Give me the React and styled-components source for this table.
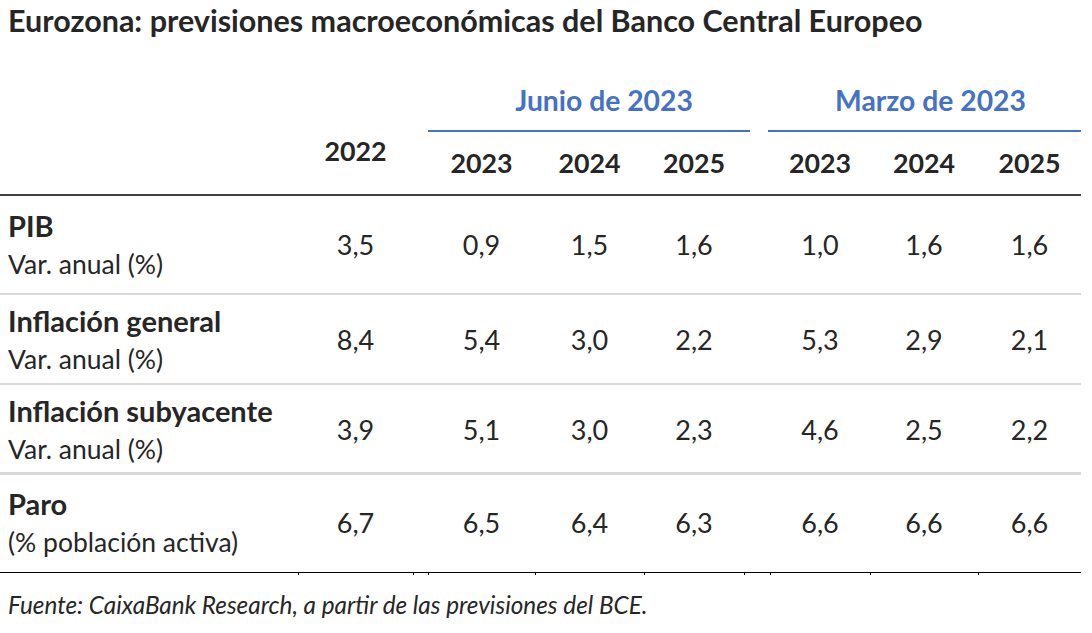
import React from 'react';
import styled, { createGlobalStyle } from 'styled-components';

const GlobalStyle = createGlobalStyle`
  body {
    margin: 0;
    background: #ffffff;
    font-family: Lato, "Open Sans", sans-serif;
    color: #262626;
  }
`;

const COLS = '298px 115px 15px 107px 109px 100px 26px 100px 108px 103px';

const Page = styled.div`
  width: 1092px;
  height: 633px;
  overflow: hidden;
`;

const Title = styled.h1`
  margin: 0;
  padding-left: 8px;
  font-size: 30.5px;
  line-height: 40px;
  font-weight: 700;
  color: #262626;
  white-space: nowrap;
`;

const Table = styled.div`
  width: 1081px;
`;

const Row = styled.div`
  display: grid;
  grid-template-columns: ${COLS};
  align-items: ${p => p.$align || 'center'};
  padding-top: ${p => p.$pt || 0}px;
  padding-bottom: ${p => p.$pb || 0}px;
  border-bottom: ${p => p.$border || 'none'};
  height: ${p => (p.$h ? `${p.$h}px` : 'auto')};
  box-sizing: border-box;
`;

const GroupCell = styled.div`
  grid-column: ${p => p.$span};
  align-self: stretch;
  display: flex;
  align-items: flex-end;
  justify-content: center;
  padding-bottom: 12px;
  padding-left: ${p => p.$shift || 0}px;
  margin-left: ${p => p.$ml || 0}px;
  margin-right: ${p => p.$mr || 0}px;
  border-bottom: 2px solid #4472c4;
  color: #4472c4;
  font-size: 28.3px;
  font-weight: 700;
  line-height: 36px;
  white-space: nowrap;
`;

const YearCell = styled.div`
  grid-column: ${p => p.$col};
  text-align: center;
  font-size: 26.8px;
  font-weight: 700;
  line-height: 38px;
  padding-bottom: ${p => p.$lift || 0}px;
`;

const LabelCell = styled.div`
  padding-left: 8px;
  white-space: nowrap;
`;

const LabelMain = styled.div`
  font-size: 29px;
  font-weight: 700;
  line-height: 38px;
`;

const LabelSub = styled.div`
  font-size: 26.5px;
  font-weight: 400;
  line-height: 38px;
`;

const Value = styled.div`
  grid-column: ${p => p.$col};
  position: relative;
  align-self: stretch;
  display: flex;
  align-items: center;
  justify-content: center;
  font-size: 27px;
  line-height: 38px;
`;

const Gap = styled.div`
  grid-column: ${p => p.$col};
  position: relative;
  align-self: stretch;
`;

// tiny tick under the closing line, at the start of a column
const Tick = styled.span`
  position: absolute;
  left: 0;
  bottom: ${p => -p.$below}px;
  width: 1px;
  height: 3px;
  background: #000;
`;

const Footnote = styled.p`
  margin: 17px 0 0;
  padding-left: 8px;
  font-size: 24.3px;
  font-style: italic;
  line-height: 30px;
  color: #262626;
  white-space: nowrap;
`;

const rows = [
  { label: 'PIB', sub: 'Var. anual (%)', values: ['3,5', '0,9', '1,5', '1,6', '1,0', '1,6', '1,6'], pt: 11, pb: 10, border: '2px solid #d9d9d9' },
  { label: 'Inflación general', sub: 'Var. anual (%)', values: ['8,4', '5,4', '3,0', '2,2', '5,3', '2,9', '2,1'], pt: 7, pb: 5, border: '2px solid #d9d9d9' },
  { label: 'Inflación subyacente', sub: 'Var. anual (%)', values: ['3,9', '5,1', '3,0', '2,3', '4,6', '2,5', '2,2'], pt: 7, pb: 4, border: '3px solid #d9d9d9' },
  { label: 'Paro', sub: '(% población activa)', values: ['6,7', '6,5', '6,4', '6,3', '6,6', '6,6', '6,6'], pt: 10, pb: 11, border: '1px solid #000', last: true },
];

const valueCols = [2, 4, 5, 6, 8, 9, 10];
const years = ['2023', '2024', '2025'];

const App = () => {
  return (
    <Page>
      <GlobalStyle />
      <Title>Eurozona: previsiones macroeconómicas del Banco Central Europeo</Title>
      <Table>
        <Row $h={92} $align="stretch">
          <GroupCell $span="4 / 7" $mr={-6} $shift={30}>Junio de 2023</GroupCell>
          <GroupCell $span="8 / 11" $ml={-2} $shift={12}>Marzo de 2023</GroupCell>
        </Row>
        <Row $h={64} $align="end" $pb={12} $border="2px solid #404040">
          <YearCell $col={2} $lift={12}>2022</YearCell>
          {years.map((y, i) => <YearCell key={`j${y}`} $col={4 + i}>{y}</YearCell>)}
          {years.map((y, i) => <YearCell key={`m${y}`} $col={8 + i}>{y}</YearCell>)}
        </Row>
        {rows.map(r => (
          <Row key={r.label} $pt={r.pt} $pb={r.pb} $border={r.border}>
            <LabelCell>
              <LabelMain>{r.label}</LabelMain>
              <LabelSub>{r.sub}</LabelSub>
            </LabelCell>
            {r.values.map((v, i) => (
              <Value key={i} $col={valueCols[i]}>
                {v}
                {r.last && <Tick $below={r.pb + 3} />}
              </Value>
            ))}
            {r.last && <Gap $col={3}><Tick $below={r.pb + 3} /></Gap>}
            {r.last && <Gap $col={7}><Tick $below={r.pb + 3} /></Gap>}
          </Row>
        ))}
      </Table>
      <Footnote>Fuente: CaixaBank Research, a partir de las previsiones del BCE.</Footnote>
    </Page>
  );
};

export default App;
